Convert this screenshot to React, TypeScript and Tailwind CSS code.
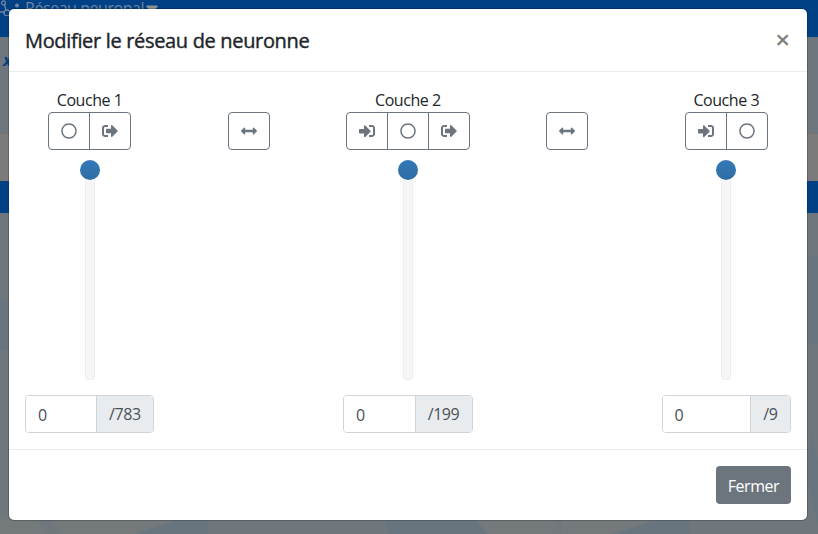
import { useState } from "react";
import { FaArrowsAltH, FaRegCircle, FaSignInAlt, FaSignOutAlt, FaCaretDown } from "react-icons/fa";

type Kind = "in" | "node" | "out";

const icons = { in: FaSignInAlt, node: FaRegCircle, out: FaSignOutAlt };

function Layer({ name, kinds, max, width }: { name: string; kinds: Kind[]; max: number; width: string }) {
  const [value, setValue] = useState("0");
  return (
    <div className={`flex flex-col items-center ${width}`}>
      <div className="h-6 text-base tracking-[-0.45px] whitespace-nowrap">{name}</div>
      <div className="flex h-[38px] divide-x divide-[#6c757d] rounded border border-[#6c757d] text-[#6c757d]">
        {kinds.map((kind) => {
          const Icon = icons[kind];
          return (
            <button key={kind} className="flex w-[41px] items-center justify-center last:w-10">
              <Icon size={16} />
            </button>
          );
        })}
      </div>
      <div className="mt-[10px] flex h-[220px] w-5 flex-col items-center">
        <div className="h-5 w-5 shrink-0 rounded-full bg-linear-to-b from-[#337ab7] to-[#2e6da4]" />
        <div className="w-[10px] grow rounded-b border border-t-0 border-[#ededed] bg-[#f6f6f6]" />
      </div>
      <div className="mt-[15px] flex h-[38px] w-full overflow-hidden rounded border border-[#ced4da] text-base tracking-[-0.4px] text-[#495057]">
        <input
          className="min-w-0 grow bg-white px-3 pt-0.5 outline-none"
          value={value}
          onChange={(e) => setValue(e.target.value)}
        />
        <span className="flex items-center border-l border-[#ced4da] bg-[#e9ecef] pr-[12.5px] pl-3">/{max}</span>
      </div>
    </div>
  );
}

function Link() {
  return (
    <button className="mt-6 flex h-[38px] w-[42px] items-center justify-center rounded border border-[#6c757d] text-[#6c757d]">
      <FaArrowsAltH size={16} />
    </button>
  );
}

function Backdrop() {
  return (
    <div className="absolute inset-0 flex flex-col bg-[#6f777c]">
      <div className="h-[37px] bg-[#004085]">
        <div className="flex h-4 items-center text-base tracking-[-0.45px] text-[#6f85a3]">
          <svg className="h-4 w-5" viewBox="0 0 20 16" fill="none" stroke="currentColor" strokeWidth="1.3">
            <circle cx="3.5" cy="3" r="2" />
            <circle cx="7" cy="13" r="3" />
            <path d="M0 12h4M4.5 5l1.5 5" />
            <circle cx="17" cy="5.5" r="2" fill="currentColor" stroke="none" />
          </svg>
          <span className="ml-[5px] leading-6">Réseau neuronal</span>
          <FaCaretDown className="-ml-0.5 text-[#8f9295]" size={20} />
        </div>
      </div>
      <div className="h-[97px] bg-[#6e777d] pt-[11px] text-[#004085]">
        <span className="ml-[3px] font-bold italic">x</span>
      </div>
      <div className="h-[47px] bg-[#7d7b79]" />
      <div className="h-8 bg-[#004085]" />
      <svg className="w-full grow" viewBox="0 213 818 321" preserveAspectRatio="none">
        <path fill="#68757f" d="M0 300h10v50H0zM806 256h12v88h-12zM135 534l53-18h20v18zM385 516h88l14 18H389zM612 534l60-18h17v18z" />
        <path fill="#74797b" d="M0 516h32l18 18H0zM50 516h138l-53 18H60zM473 516h80l8 18h-74zM561 516h105l-54 18h-51z" />
        <path fill="#68757f" d="M811 430l7 30v65l-12-45z" />
      </svg>
    </div>
  );
}

export default function App() {
  return (
    <div className="relative h-[534px] w-[818px] overflow-hidden font-['Open_Sans','Noto_Sans',sans-serif] text-[#212529]">
      <Backdrop />
      <div className="relative mx-[9px] mt-[9px] flex h-[511px] w-[798px] flex-col rounded-[5px] bg-white shadow-[0_0_0_1px_rgba(0,0,0,0.2)]">
        <header className="flex h-[63px] items-center justify-between border-b border-[#e9ecef] px-4">
          <h5 className="pt-px text-[20px] tracking-[-0.33px] [-webkit-text-stroke:0.4px_#212529]">
            Modifier le réseau de neuronne
          </h5>
          <button className="mr-px mb-0.5 text-[26px] leading-none font-semibold text-[#7f7f7f]">×</button>
        </header>
        <main className="flex grow items-start justify-between px-4 pt-4">
          <Layer name="Couche 1" kinds={["node", "out"]} max={783} width="w-[129.2px]" />
          <Link />
          <Layer name="Couche 2" kinds={["in", "node", "out"]} max={199} width="w-[130px]" />
          <Link />
          <Layer name="Couche 3" kinds={["in", "node"]} max={9} width="w-[129.4px]" />
        </main>
        <footer className="flex h-[71px] items-center justify-end border-t border-[#e9ecef] px-4">
          <button className="h-[38px] w-[75px] rounded bg-[#6c757d] pt-px text-base tracking-[-0.45px] text-white">
            Fermer
          </button>
        </footer>
      </div>
    </div>
  );
}
